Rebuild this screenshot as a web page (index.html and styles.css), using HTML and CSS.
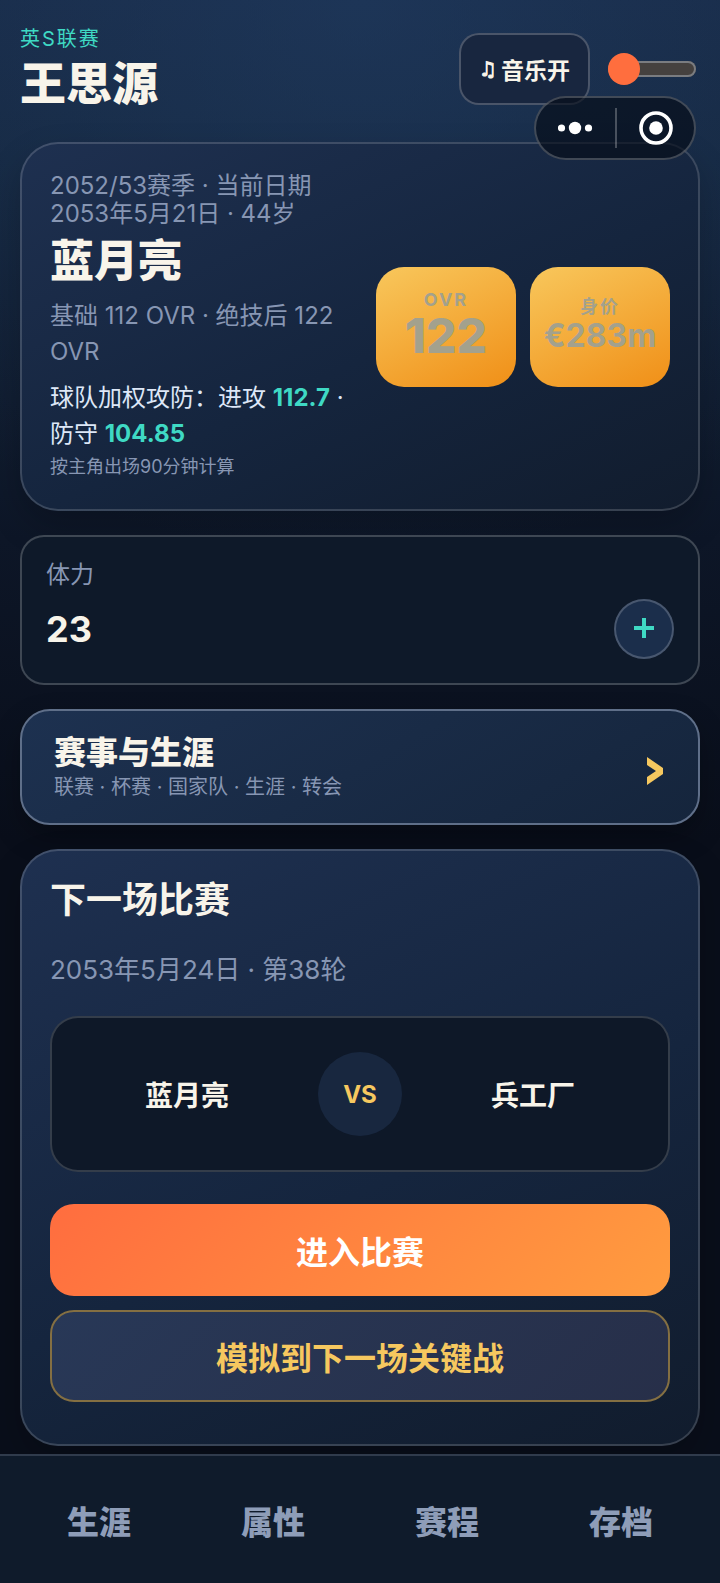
FILE: index.html
```html
<!DOCTYPE html>
<html lang="zh-CN">
<head>
<meta charset="utf-8">
<meta name="viewport" content="width=device-width, initial-scale=1">
<title>王思源</title>
<link rel="stylesheet" href="styles.css">
</head>
<body>
<div class="page">
  <main class="content">
    <header class="topbar">
      <div class="player">
        <p class="league">英S联赛</p>
        <h1 class="name">王思源</h1>
      </div>
      <div class="audio">
        <button class="music" type="button"><span class="note">♫</span>音乐开</button>
        <input class="volume" type="range" min="0" max="100" value="0" aria-label="音量">
      </div>
    </header>

    <section class="card hero">
      <div class="hero-info">
        <p class="season">2052/53赛季 · 当前日期<br>2053年5月21日 · 44岁</p>
        <h2 class="club">蓝月亮</h2>
        <p class="rating">基础 112 OVR · 绝技后 122 OVR</p>
        <p class="power">球队加权攻防：进攻 <strong>112.7</strong> · 防守 <strong>104.85</strong></p>
        <p class="hint">按主角出场90分钟计算</p>
      </div>
      <div class="tiles">
        <div class="tile"><span class="tile-label">OVR</span><span class="tile-score">122</span></div>
        <div class="tile"><span class="tile-label">身价</span><span class="tile-value">€283m</span></div>
      </div>
    </section>

    <section class="stamina">
      <p class="stamina-label">体力</p>
      <div class="stamina-row">
        <strong class="stamina-value">23</strong>
        <button class="add" type="button" aria-label="增加体力">
          <svg width="20" height="22" viewBox="0 0 20 22" aria-hidden="true"><path d="M0 10h20M10 0v20" stroke="#3fd9c4" stroke-width="4" fill="none"/></svg>
        </button>
      </div>
    </section>

    <button class="career" type="button">
      <span class="career-text">
        <span class="career-title">赛事与生涯</span>
        <span class="career-sub">联赛 · 杯赛 · 国家队 · 生涯 · 转会</span>
      </span>
      <svg width="18" height="38" viewBox="0 0 18 38" aria-hidden="true"><path d="M1 9v8l9 6-9 6v8l16-11v-6z" fill="#f6c85f"/></svg>
    </button>

    <section class="card next">
      <h2 class="next-title">下一场比赛</h2>
      <p class="next-date">2053年5月24日 · 第38轮</p>
      <div class="match">
        <span class="team">蓝月亮</span>
        <span class="versus">VS</span>
        <span class="team">兵工厂</span>
      </div>
      <div class="actions">
        <button class="action primary" type="button">进入比赛</button>
        <button class="action secondary" type="button">模拟到下一场关键战</button>
      </div>
    </section>
  </main>

  <nav class="tabs">
    <a href="#career">生涯</a>
    <a href="#attributes">属性</a>
    <a href="#schedule">赛程</a>
    <a href="#saves">存档</a>
  </nav>

  <div class="capsule">
    <button type="button" aria-label="更多">
      <svg width="36" height="36" viewBox="0 0 36 36" fill="#fff" aria-hidden="true"><circle cx="3.500" cy="18" r="3.600"/><circle cx="17" cy="18" r="6.200"/><circle cx="30.500" cy="18" r="3.600"/></svg>
    </button>
    <button type="button" aria-label="关闭">
      <svg width="36" height="36" viewBox="0 0 36 36" aria-hidden="true"><circle cx="18" cy="18" r="15" fill="none" stroke="#fff" stroke-width="3.600"/><circle cx="18" cy="18" r="6.800" fill="#fff"/></svg>
    </button>
  </div>
</div>
</body>
</html>
```

FILE: styles.css
```css
* {
  box-sizing: border-box;
}

body {
  margin: 0;
  background: #090e1a;
  color: #f8f4ea;
  font-family: Inter, "Noto Sans CJK SC", sans-serif;
  font-size: 24px;
}

h1, h2, p {
  margin: 0;
}

button, input {
  margin: 0;
  font-family: inherit;
  color: inherit;
}

svg {
  display: block;
  flex: none;
}

.page {
  position: relative;
  display: flex;
  flex-direction: column;
  min-height: 100vh;
  background:
    radial-gradient(ellipse 90% 560px at 50% 0, rgba(34, 64, 104, 0.5), transparent),
    linear-gradient(180deg, #182a46 0, #15273f 160px, #0d1627 540px, #090e1a 840px);
}

.content {
  flex: 1;
  display: flex;
  flex-direction: column;
  gap: 24px;
  padding: 24px 20px 8px;
}

.topbar {
  display: flex;
  align-items: center;
  justify-content: space-between;
  margin-bottom: 4px;
}

.league {
  color: #3fd9c4;
  font-size: 20px;
  line-height: 30px;
  letter-spacing: 2px;
}

.name {
  font-size: 46px;
  font-weight: 900;
  line-height: 58px;
  padding-bottom: 2px;
}

.audio {
  display: flex;
  align-items: center;
  gap: 14px;
}

.music {
  display: flex;
  align-items: center;
  gap: 4px;
  height: 72px;
  padding: 0 18px;
  border: 2px solid rgba(255, 255, 255, 0.22);
  border-radius: 20px;
  background: #18263f;
  font-size: 23px;
  font-weight: 700;
}

.note {
  font-family: "DejaVu Sans", sans-serif;
  font-size: 20px;
  -webkit-text-stroke: 1px currentColor;
}

.volume {
  appearance: none;
  width: 88px;
  height: 32px;
  margin: 0 4px;
  background: none;
}

.volume::-webkit-slider-runnable-track {
  height: 16px;
  border-radius: 8px;
  background: #45413f;
  box-shadow: inset 0 0 0 2px #7a7c80;
}

.volume::-webkit-slider-thumb {
  appearance: none;
  width: 32px;
  height: 32px;
  margin-top: -8px;
  border-radius: 50%;
  background: #ff6e3e;
}

.card {
  padding: 28px;
  border: 2px solid rgba(255, 255, 255, 0.16);
  border-radius: 38px;
  background: linear-gradient(155deg, #1e3050, #15253e 55%, #111c2d) border-box;
  box-shadow: 0 16px 36px rgba(0, 0, 0, 0.2);
}

.hero {
  display: flex;
  align-items: center;
  gap: 28px;
}

.hero-info {
  flex: 1;
  min-width: 0;
}

.season {
  color: #8796b3;
  line-height: 28px;
}

.club {
  margin: 4px 0 8px;
  font-size: 44px;
  font-weight: 900;
  line-height: 58px;
}

.rating {
  color: #8796b3;
  line-height: 36px;
}

.power {
  margin-top: 10px;
  color: #dde7f7;
  line-height: 36px;
}

.power strong {
  color: #3fd9c4;
}

.hint {
  color: #8796b3;
  font-size: 18px;
  line-height: 29px;
}

.tiles {
  display: flex;
  gap: 14px;
}

.tile {
  display: flex;
  flex-direction: column;
  align-items: center;
  justify-content: center;
  width: 140px;
  height: 120px;
  padding-bottom: 4px;
  border-radius: 28px;
  background: linear-gradient(155deg, #f8c75c, #f08f17);
  color: #a3a18d;
  font-weight: 700;
}

.tile-label {
  font-size: 18px;
  line-height: 22px;
  letter-spacing: 2px;
}

.tile-score {
  font-size: 48px;
  font-weight: 800;
  line-height: 50px;
}

.tile-value {
  font-size: 32px;
  line-height: 36px;
}

.stamina {
  padding: 24px;
  border: 2px solid rgba(255, 255, 255, 0.2);
  border-radius: 24px;
  background: #0e1929;
}

.stamina-label {
  color: #8796b3;
  line-height: 28px;
}

.stamina-row {
  display: flex;
  align-items: center;
  justify-content: space-between;
  margin-top: 10px;
}

.stamina-value {
  font-size: 36px;
  line-height: 60px;
}

.add {
  display: flex;
  align-items: center;
  justify-content: center;
  width: 60px;
  height: 60px;
  padding: 0;
  border: 2px solid rgba(255, 255, 255, 0.2);
  border-radius: 50%;
  background: #1b2e4b;
}

.career {
  display: flex;
  align-items: center;
  justify-content: space-between;
  padding: 22px 34px 22px 32px;
  border: 2px solid #5f6f89;
  border-radius: 30px;
  background: linear-gradient(150deg, #1d3150, #15253c);
  box-shadow: 0 12px 28px rgba(0, 0, 0, 0.25);
  text-align: left;
}

.career-text {
  display: flex;
  flex-direction: column;
}

.career-title {
  font-size: 32px;
  font-weight: 900;
  line-height: 40px;
}

.career-sub {
  color: #8796b3;
  font-size: 20px;
  line-height: 28px;
}

.next-title {
  font-size: 36px;
  line-height: 42px;
}

.next-date {
  margin: 28px 0 25px;
  color: #8796b3;
  font-size: 26px;
  line-height: 42px;
}

.match {
  display: grid;
  grid-template-columns: 1fr auto 1fr;
  align-items: center;
  gap: 30px;
  padding: 34px;
  border: 2px solid rgba(255, 255, 255, 0.16);
  border-radius: 28px;
  background: #0e1828;
}

.team {
  font-size: 28px;
  font-weight: 700;
  text-align: center;
}

.versus {
  display: flex;
  align-items: center;
  justify-content: center;
  width: 84px;
  height: 84px;
  border-radius: 50%;
  background: #18273f;
  color: #f6c85f;
  font-size: 24px;
  font-weight: 700;
}

.actions {
  display: flex;
  flex-direction: column;
  gap: 14px;
  margin: 32px 0 14px;
}

.action {
  height: 92px;
  border: 0;
  border-radius: 24px;
  font-size: 32px;
  font-weight: 700;
}

.primary {
  background: linear-gradient(135deg, #ff6d3f, #ff9c3f);
  color: #fff;
}

.secondary {
  border: 2px solid #846f42;
  background: linear-gradient(135deg, #283857, #272f49);
  color: #f6c85f;
}

.tabs {
  display: grid;
  grid-template-columns: repeat(4, 1fr);
  align-items: center;
  height: 129px;
  padding: 0 12px;
  border-top: 2px solid #303b4c;
  background: #0f1b2b;
}

.tabs a {
  color: #8e9db8;
  font-size: 32px;
  font-weight: 900;
  text-align: center;
  text-decoration: none;
}

.capsule {
  position: absolute;
  top: 96px;
  right: 24px;
  display: flex;
  align-items: center;
  height: 64px;
  border: 2px solid rgba(255, 255, 255, 0.22);
  border-radius: 32px;
  background: rgba(4, 11, 22, 0.64);
}

.capsule button {
  display: flex;
  align-items: center;
  justify-content: center;
  width: 79px;
  height: 40px;
  padding: 0;
  border: 0;
  background: none;
}

.capsule button + button {
  border-left: 2px solid rgba(255, 255, 255, 0.25);
}
```
